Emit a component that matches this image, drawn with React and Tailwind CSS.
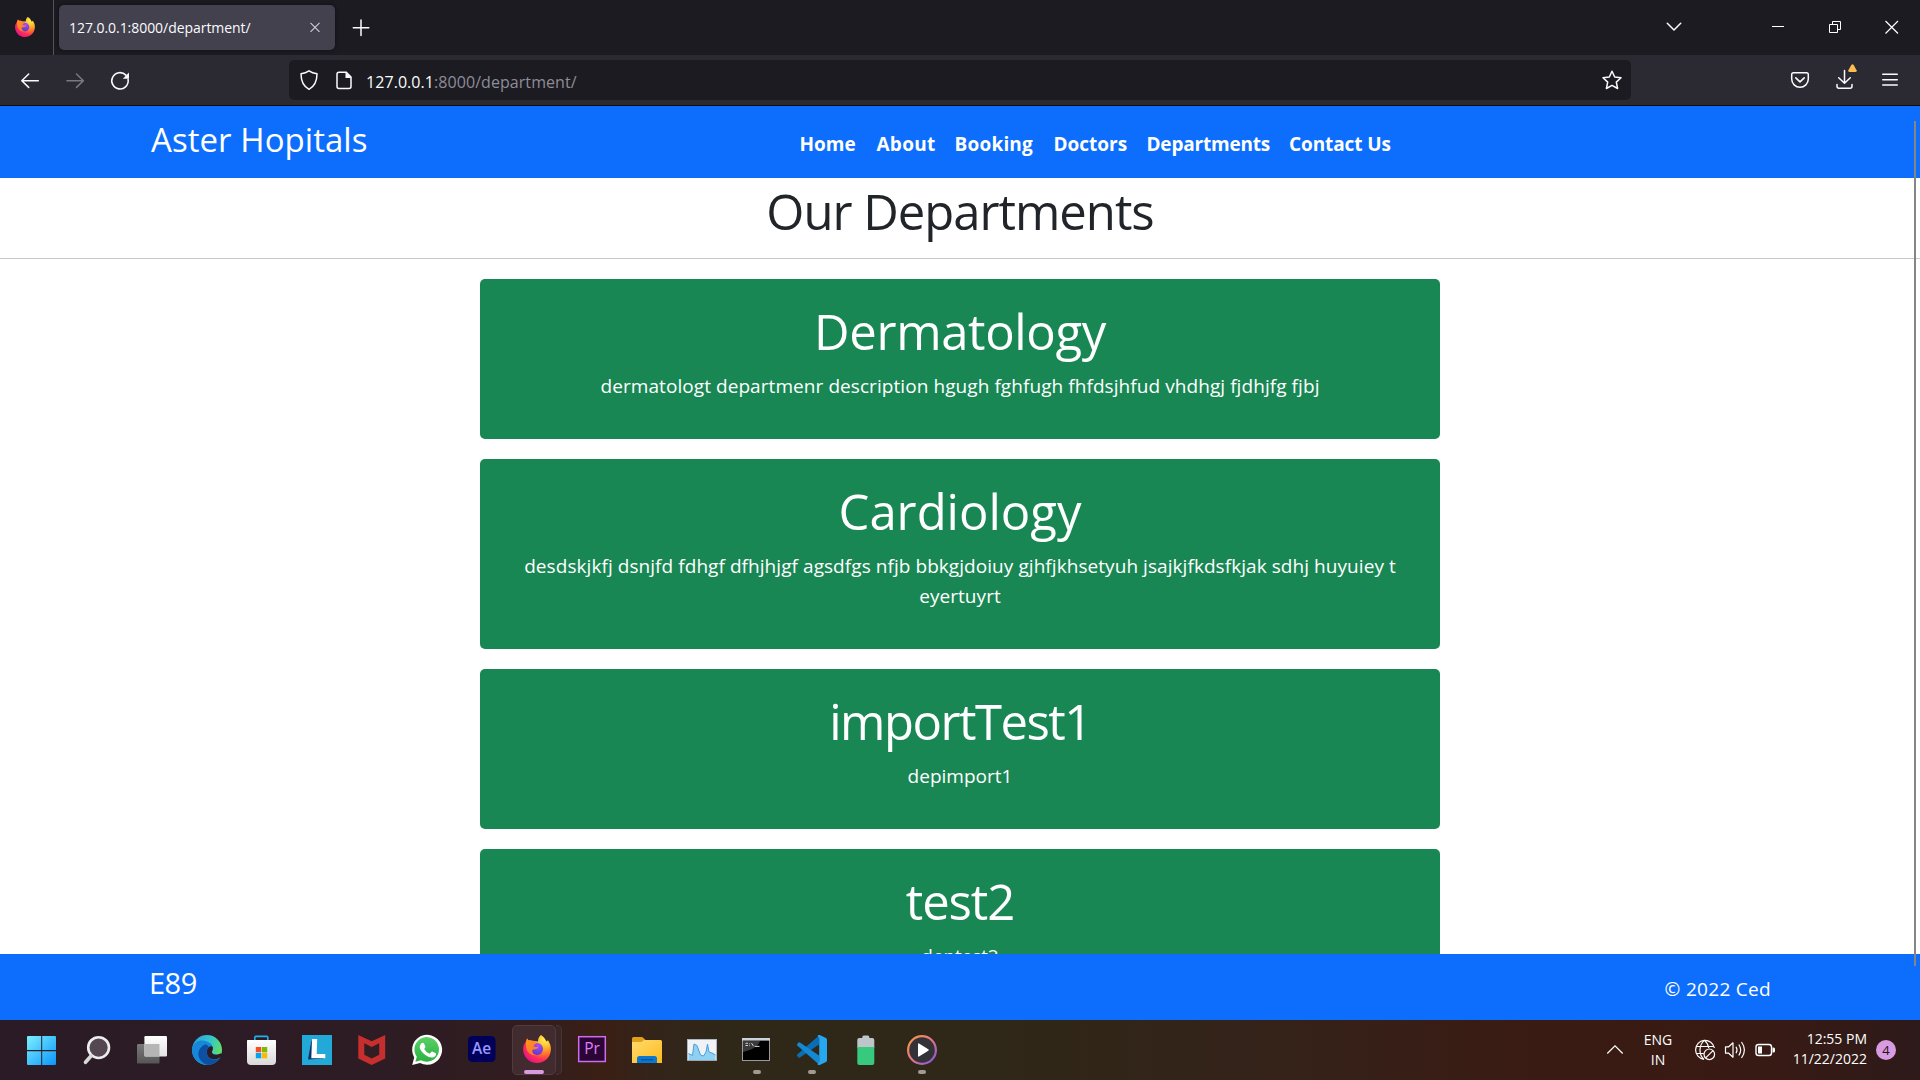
import React, { useId } from "react";

const departments = [
  { name: "Dermatology", tracking: "tracking-[-0.35px]", body: "tracking-[0.07px]", lines: ["dermatologt departmenr description hgugh fghfugh fhfdsjhfud vhdhgj fjdhjfg fjbj"] },
  { name: "Cardiology", tracking: "tracking-normal", body: "tracking-[0.06px]", lines: ["desdskjkfj dsnjfd fdhgf dfhjhjgf agsdfgs nfjb bbkgjdoiuy gjhfjkhsetyuh jsajkjfkdsfkjak sdhj huyuiey t", "eyertuyrt"] },
  { name: "importTest1", tracking: "tracking-[-1.5px]", body: "tracking-normal", lines: ["depimport1"] },
  { name: "test2", tracking: "tracking-[-1.1px]", body: "tracking-[-0.1px]", lines: ["deptest2"] },
];

const links = [
  ["Home", "w-[77px]"],
  ["About", "w-[78px] tracking-[0.25px]"],
  ["Booking", "w-[99px] tracking-[0.2px]"],
  ["Doctors", "w-[93px]"],
  ["Departments", "w-[142.5px] tracking-[-0.2px]"],
  ["Contact Us", "w-[110px] tracking-[-0.1px]"],
];

/* Icon whose viewBox is given in window coordinates. */
function Icon({ x, y, w, h, children, className = "" }) {
  return (
    <svg width={w} height={h} viewBox={`${x} ${y} ${w} ${h}`} fill="none" className={`block shrink-0 ${className}`}>
      {children}
    </svg>
  );
}

function Firefox({ size }) {
  const id = useId().replace(/[^a-zA-Z0-9]/g, "");
  return (
    <svg width={size} height={size} viewBox="0 0 28 28" className="block shrink-0">
      <defs>
        <radialGradient id={`${id}b`} cx="0.78" cy="0.16" r="0.95">
          <stop offset="0" stopColor="#fff44f" />
          <stop offset="0.28" stopColor="#ffbd2e" />
          <stop offset="0.52" stopColor="#ff7a2a" />
          <stop offset="0.76" stopColor="#ff2f55" />
          <stop offset="1" stopColor="#e2128a" />
        </radialGradient>
        <radialGradient id={`${id}p`} cx="0.6" cy="0.2" r="0.9">
          <stop offset="0" stopColor="#a94bff" />
          <stop offset="1" stopColor="#4b3bc4" />
        </radialGradient>
        <linearGradient id={`${id}o`} x1="0" y1="0" x2="1" y2="1">
          <stop offset="0" stopColor="#ff9a16" />
          <stop offset="1" stopColor="#ff6a3c" />
        </linearGradient>
      </defs>
      <path d="M18 0C21 2 22.5 4.3 23.4 6.600L25 5.200C27.200 8.400 28 11.500 27.900 14.400C27.600 22.200 21.600 28 14 28C6.200 28 .1 21.800 .1 14.200C.1 10.800 1.400 8.300 3.100 6.200C3 5 3.400 4.400 4.200 3.400L5.400 5.300C7.200 5 8.600 5.200 9.800 5.800L15 6.400C15 3.800 16 1.400 18 0Z" fill={`url(#${id}b)`} />
      <circle cx="14" cy="14" r="6" fill={`url(#${id}p)`} />
      <path d="M4.200 3.400L5.400 5.300C8 4.900 9.600 5.700 10.700 7C11.800 7.100 12.800 7.100 13.600 7.500C12.800 9.400 10.800 9.700 10.600 11.200C11.900 12.200 14.600 11.700 15.600 12C14.900 14.300 11.600 14.100 9.500 14.800C8.900 17.500 10.700 19.600 13.500 20.200C7.500 21.300 3 16.500 3.200 11C3 9.500 2.800 8 3.100 6.200Z" fill={`url(#${id}o)`} />
    </svg>
  );
}

const taskIcons = [
  /* Start */
  <g key="start" fill="url(#winblue)">
    <path d="M28 1036h13.2v14H27v-13q0-1 1-1zM42.2 1036H55q1 0 1 1v13H42.2zM27 1051.2h14.2v13.8H28q-1 0-1-1zM42.2 1051.2H56V1064q0 1-1 1H42.2z" />
  </g>,
  /* Search */
  <g key="search">
    <circle cx="98.6" cy="1047.6" r="10.4" fill="#54474f" stroke="#ededed" strokeWidth="2.6" />
    <path d="M91 1056l-5.5 6.3" stroke="#d9d9d9" strokeWidth="3.6" strokeLinecap="round" />
  </g>,
  /* Task view */
  <g key="view">
    <rect x="137" y="1044" width="22.5" height="19.6" rx="1.2" fill="url(#grayG)" />
    <rect x="144.4" y="1036" width="22.6" height="20.4" rx="1.2" fill="url(#whiteG)" />
    <path d="M144.4 1044h15.1v12.4h-14q-1.1 0-1.1-1.2z" fill="#b5b5b5" />
  </g>,
  /* Edge */
  <g key="edge">
    <circle cx="207" cy="1050" r="15" fill="url(#edgeTop)" />
    <path d="M192 1049C193 1043 198 1040.5 202 1040.5C208 1040.5 213 1044.5 213 1048C213 1050.5 211.5 1051.5 212 1052.7C213 1055 218.5 1055.3 221.5 1053C219 1061 213 1065 207 1065C198.7 1065 191.5 1058 192 1049Z" fill="#1687d9" />
    <path d="M204.8 1044.5C199 1047.5 196.5 1054 200 1059.3C202 1062.6 205.5 1065 209 1064.9C215 1064 219 1060.6 220.4 1058C215 1061.5 209.5 1059.5 207.5 1056C206 1053 206.5 1049.5 209 1047.3C208 1045.2 206.5 1044.2 204.8 1044.5Z" fill="#0d4fa3" />
    <path d="M209 1047.3C206.5 1049.5 206.2 1053 207.8 1056C210 1059.3 215 1060.5 219.5 1057.8L222.5 1055.2C222.2 1053.6 221.5 1053 220 1053.8C216.5 1055.4 212.8 1054.6 212 1052.7C211.5 1051.2 213.2 1050.3 212.9 1047.8C212 1045.8 210 1046 209 1047.3Z" fill="#2b1b24" />
  </g>,
  /* Store */
  <g key="store">
    <path d="M254.8 1041v-3.6q0-1 1-1h11q1 0 1 1v3.6" stroke="#1fb0ee" strokeWidth="1.6" />
    <path d="M247 1040.5q0-.6.6-.6h27.800q.6 0 .6.6V1061q0 4-4 4h-21q-4 0-4-4z" fill="url(#storeG)" />
    <rect x="255.800" y="1047" width="5.400" height="5.300" fill="#f25022" />
    <rect x="261.900" y="1047" width="5.300" height="5.300" fill="#7fba00" />
    <rect x="255.800" y="1053" width="5.400" height="5.300" fill="#00a4ef" />
    <rect x="261.900" y="1053" width="5.300" height="5.300" fill="#ffb900" />
  </g>,
  /* L */
  <g key="l">
    <rect x="302" y="1035" width="30" height="30" fill="#22a9d8" />
    <path d="M311.500 1040l-3.500 19.500 16-1-9-4z" fill="#0b2f6b" />
    <path d="M312 1039h5.200l-.5 15h8.600v4.200h-14z" fill="#fff" />
  </g>,
  /* McAfee */
  <g key="mc">
    <path d="M358.300 1035L371.700 1041.300L385.200 1035V1058.500L371.700 1065L358.300 1058.500Z" fill="#c62f2e" />
    <path d="M364.300 1043.300L371.700 1047L379.200 1043.300V1054.800L371.700 1058.500L364.300 1054.800Z" fill="#311d24" />
  </g>,
  /* WhatsApp */
  <g key="wa">
    <path d="M412.200 1065l2-7.600A15 15 0 1 1 420 1063z" fill="#fff" />
    <path d="M415.400 1061.700l1.400-5A12.300 12.300 0 1 1 421 1060.300z" fill="url(#waG)" />
    <path d="M421.200 1043.400q1.800-1.400 2.800 0l1.400 3.200q.2.900-1.200 2.300 1.900 3.400 5.500 4.900l1.800-2q.5-.4 1.200-.1l3.200 1.600q.8 2.400-2.300 4-3.200 1.200-8.300-2.300-5.400-4.500-5.600-7.800 0-2.400 1.500-3.800z" fill="#fff" />
  </g>,
  /* After Effects */
  <g key="ae">
    <rect x="468" y="1036" width="27.500" height="26" rx="4.500" fill="#00005b" />
    <text x="481.700" y="1054" textAnchor="middle" fontSize="15.500" fontWeight="600" fill="#9999ff" className="font-['Open_Sans',sans-serif]">Ae</text>
  </g>,
  null,
  /* Premiere */
  <g key="pr">
    <rect x="578.700" y="1036.700" width="26.600" height="24.800" fill="#2a0634" stroke="#cf6bf0" strokeWidth="1.500" />
    <text x="592" y="1054" textAnchor="middle" fontSize="15.500" fontWeight="500" fill="#e07cff" className="font-['Open_Sans',sans-serif]">Pr</text>
  </g>,
  /* Explorer */
  <g key="exp">
    <path d="M632 1038.500q0-1.500 1.500-1.500h8q1 0 1.700.7l2.300 2.300v4H632z" fill="#e0a01a" />
    <path d="M632 1042h9.500l2.500-2h16.500q1.500 0 1.500 1.500V1063H632z" fill="url(#folderG)" />
    <path d="M637 1063v-4.500q0-2.500 2.500-2.500h15q2.500 0 2.500 2.500v4.500z" fill="#0a78cf" />
    <path d="M641 1059.700h12" stroke="#0a4f96" strokeWidth="1.200" />
  </g>,
  /* Performance graph */
  <g key="perf">
    <rect x="687.500" y="1039.500" width="29" height="20.800" fill="#f1f2f5" stroke="#a9b7c6" />
    <path d="M688.500 1053.500l4 2 1.500-11.500 3 1.500 3.500 9.500 3 1 2.500-4 1.500-8 1.500 8 4 1.500 2.500 1.500v5h-27z" fill="#8fd0f5" />
    <path d="M688.500 1053.500l4 2 1.500-11.500 3 1.500 3.500 9.500 3 1 2.500-4 1.500-8 1.500 8 4 1.500 2.500 1.500" stroke="#4a9fd8" strokeWidth="1" />
  </g>,
  /* Terminal */
  <g key="cmd">
    <rect x="742.500" y="1038.500" width="27" height="22" fill="#000" stroke="#9a9a9a" />
    <path d="M743 1041h17q-3 8-17 11z" fill="#3a3a3a" />
    <path d="M742 1038h28v2.600h-28z" fill="#ccd2dc" />
    <path d="M745.500 1043.300h2.500m-2.500 2.200h2.500m1.500-2v.8m0 1.200v.6m2-3l2 3m1.200.3h4.800" stroke="#d6d6d6" strokeWidth="1" />
    <rect x="753" y="1070" width="8" height="4" rx="2" fill="#9d9b93" />
  </g>,
  /* VS Code */
  <g key="vs">
    <path d="M819 1035.500v9L800 1057.500q-.8.4-1.400 0l-1.400-1.500q-.5-.8 0-1.500z" fill="#0a6db5" />
    <path d="M819 1064.500v-9L800 1042.500q-.8-.4-1.400 0l-1.400 1.500q-.5.800 0 1.500z" fill="#1389d3" />
    <path d="M817.500 1035.800q1-1.200 2.200-.7l6.300 3q1 .5 1 1.600v20.600q0 1.100-1 1.600l-6.300 3q-1.200.500-2.200-.7l1.700-2.200v-24z" fill="#27a7f0" />
    <rect x="808" y="1070" width="8" height="4" rx="2" fill="#9d9b93" />
  </g>,
  /* Battery */
  <g key="bat">
    <path d="M857.300 1040q0-2 2-2h3v-1q0-1.500 1.500-1.500h4q1.500 0 1.500 1.500v1h3q2 0 2 2v8h-17z" fill="#bfc6ca" />
    <path d="M857.300 1047h17v16q0 2-2 2h-13q-2 0-2-2z" fill="#37c97d" />
  </g>,
  /* Media player */
  <g key="mp">
    <circle cx="922" cy="1050" r="13.900" fill="#333337" stroke="url(#ring)" strokeWidth="2.200" />
    <path d="M918 1044.200q0-1.200 1-.7l9.300 5.700q1 .8 0 1.600l-9.300 5.700q-1 .5-1-.7z" fill="#fff" />
    <rect x="918" y="1070" width="8" height="4" rx="2" fill="#9d9b93" />
  </g>,
];

function Gradients() {
  return (
    <svg width="0" height="0" className="absolute">
      <defs>
        <linearGradient id="winblue" gradientUnits="userSpaceOnUse" x1="27" y1="1036" x2="56" y2="1065"><stop stopColor="#7cf0ff" /><stop offset="1" stopColor="#0a95fb" /></linearGradient>
        <linearGradient id="grayG" x1="0" y1="0" x2="0" y2="1"><stop stopColor="#7a7a7a" /><stop offset="1" stopColor="#555" /></linearGradient>
        <linearGradient id="whiteG" x1="0" y1="0" x2="0" y2="1"><stop stopColor="#fff" /><stop offset="1" stopColor="#e2e2e2" /></linearGradient>
        <linearGradient id="edgeTop" x1="0" y1="0.3" x2="1" y2="0.6"><stop stopColor="#26a6de" /><stop offset="0.55" stopColor="#36c6c8" /><stop offset="1" stopColor="#66e25a" /></linearGradient>
        <linearGradient id="storeG" x1="0" y1="0" x2="0" y2="1"><stop stopColor="#fff" /><stop offset="1" stopColor="#d9d9d9" /></linearGradient>
        <linearGradient id="waG" x1="0" y1="0" x2="0" y2="1"><stop stopColor="#5bd066" /><stop offset="1" stopColor="#2bb141" /></linearGradient>
        <linearGradient id="folderG" x1="0" y1="0" x2="1" y2="1"><stop stopColor="#ffdb70" /><stop offset="1" stopColor="#fdbb1c" /></linearGradient>
        <linearGradient id="ring" x1="0" y1="0" x2="1" y2="1"><stop stopColor="#ff9a3c" /><stop offset="0.5" stopColor="#e0748a" /><stop offset="1" stopColor="#7b55e0" /></linearGradient>
      </defs>
    </svg>
  );
}

function TitleBar() {
  return (
    <div className="flex h-[55px] shrink-0 bg-[#1c1b22]">
      <div className="flex w-[54px] justify-end border-r border-[#54535a] pt-[17px] pr-[18px]">
        <Firefox size={20} />
      </div>
      <div className="mt-[5px] ml-[5px] flex h-[45px] w-[276px] items-center rounded-[5px] bg-[#42414d] pl-[10px] shadow-[0_0_4px_rgba(0,0,0,0.5)]">
        <span className="w-[239px] shrink-0 pt-px text-[14px] leading-[20px] tracking-[-0.05px] text-[#fbfbfe]">127.0.0.1:8000/department/</span>
        <Icon x={308} y={20} w={14} h={15}>
          <path d="M310.500 22.800l9 9m0-9l-9 9" stroke="#cfcfd4" strokeWidth="1.100" />
        </Icon>
      </div>
      <Icon x={345} y={0} w={32} h={55} className="ml-[10px]">
        <path d="M361 20v15.500M353.300 27.700h15.500" stroke="#fbfbfe" strokeWidth="1.500" strokeLinecap="round" />
      </Icon>
      <Icon x={1650} y={0} w={48} h={55} className="ml-auto">
        <path d="M1667.300 23.300l6.700 6.700 6.700-6.700" stroke="#fbfbfe" strokeWidth="1.500" strokeLinecap="round" strokeLinejoin="round" />
      </Icon>
      <Icon x={1749} y={0} w={57} h={55} className="ml-[51px]">
        <path d="M1772 26.500h12" stroke="#fff" />
      </Icon>
      <Icon x={1806} y={0} w={57} h={55}>
        <path d="M1829.500 24.500h8v8h-8zM1832.500 24v-2.500h8v8h-2.500" stroke="#fff" />
      </Icon>
      <Icon x={1863} y={0} w={57} h={55}>
        <path d="M1885.500 21l12.500 12.500m0-12.500l-12.500 12.500" stroke="#fff" strokeWidth="1.200" />
      </Icon>
    </div>
  );
}

function ToolBar() {
  return (
    <div className="flex h-[50px] shrink-0 bg-[#2b2a33]">
      <Icon x={8} y={55} w={45} h={50} className="ml-2">
        <path d="M38.300 80.700H22M28.700 74l-6.900 6.700 6.900 6.700" stroke="#fbfbfe" strokeWidth="1.500" strokeLinecap="round" strokeLinejoin="round" />
      </Icon>
      <Icon x={53} y={55} w={45} h={50}>
        <path d="M67 80.700h16.300M76.500 74l6.900 6.700-6.900 6.700" stroke="#7a7981" strokeWidth="1.500" strokeLinecap="round" strokeLinejoin="round" />
      </Icon>
      <Icon x={98} y={55} w={45} h={50}>
        <path d="M128.100 79.500a8.200 8.200 0 1 1-2.200-4.400" stroke="#fbfbfe" strokeWidth="1.600" strokeLinecap="round" />
        <path d="M129 72.500v6.200h-6.200z" fill="#fbfbfe" />
      </Icon>
      <div className="mt-[5px] ml-[146px] flex h-[40px] w-[1342px] items-center rounded-[5px] bg-[#1c1b22]">
        <Icon x={289} y={60} w={77} h={40}>
          <path d="M309 70.800c-2.300 1.600-4.900 2.500-8 2.900 0 7.400 2.200 12.400 8 15.600 5.800-3.200 8-8.200 8-15.600-3.100-.4-5.700-1.300-8-2.900z" stroke="#fbfbfe" strokeWidth="1.500" strokeLinejoin="round" />
          <path d="M339 72.200h7.300l4.700 4.800v9.500q0 2-2 2h-10q-2 0-2-2v-12.300q0-2 2-2z" stroke="#fbfbfe" strokeWidth="1.500" />
          <path d="M345.500 72v6h6z" fill="#fbfbfe" />
        </Icon>
        <span className="pt-[3px] text-[16px] leading-[24px] tracking-[0.06px] text-[#8d8d97]"><span className="text-[#fbfbfe]">127.0.0.1</span>:8000/department/</span>
        <Icon x={1598} y={60} w={33} h={40} className="ml-auto">
          <path d="M1612 71.200l2.700 5.800 6.300.8-4.700 4.300 1.300 6.400-5.600-3.100-5.600 3.100 1.300-6.400-4.700-4.300 6.300-.8z" stroke="#fbfbfe" strokeWidth="1.500" strokeLinejoin="round" />
        </Icon>
      </div>
      <Icon x={1778} y={55} w={44} h={50} className="ml-[147px]">
        <path d="M1793.500 72.800h13q1.800 0 1.800 1.800v4.400a8.300 8.300 0 0 1-16.600 0v-4.400q0-1.800 1.800-1.800z" stroke="#fbfbfe" strokeWidth="1.500" />
        <path d="M1795.800 77.800l4.200 4 4.200-4" stroke="#fbfbfe" strokeWidth="1.600" strokeLinecap="round" strokeLinejoin="round" />
      </Icon>
      <Icon x={1822} y={55} w={46} h={50}>
        <path d="M1844.500 70.500v12.500M1838.700 77.700l5.800 5.500 5.800-5.500" stroke="#fbfbfe" strokeWidth="1.500" strokeLinecap="round" strokeLinejoin="round" />
        <path d="M1837 84.500v1.700q0 2 2 2h11q2 0 2-2v-1.700" stroke="#fbfbfe" strokeWidth="1.500" strokeLinecap="round" />
        <path d="M1851.200 65.300q1.300-2 2.600 0l2.800 4.900q.8 1.800-1.200 1.800h-5.800q-2 0-1.200-1.800z" fill="#ffbd4f" />
      </Icon>
      <Icon x={1868} y={55} w={44} h={50}>
        <path d="M1882.700 74.300h14.600M1882.700 79.700h14.600M1882.700 85h14.600" stroke="#fbfbfe" strokeWidth="1.400" strokeLinecap="round" />
      </Icon>
    </div>
  );
}

function Page() {
  return (
    <div className="flex h-[915px] shrink-0 flex-col border-t border-[#0c0c0d] bg-white">
      <header className="flex h-[72px] shrink-0 bg-[#0d6efd] pl-[151px] text-white">
        <div className="w-[648.5px] pt-[10px] text-[33px] leading-[48px] tracking-[0.05px]">Aster Hopitals</div>
        <nav className="flex pt-[23px] text-[19px] leading-[30px] font-bold">
          {links.map(([label, cls]) => (
            <a key={label} className={`whitespace-nowrap ${cls}`}>{label}</a>
          ))}
        </nav>
      </header>
      <main className="flex min-h-0 flex-1 flex-col overflow-hidden">
        <h1 className="mt-[3px] h-[77px] shrink-0 text-center text-[49px] leading-[60px] tracking-[-1px] text-[#212529]">Our Departments</h1>
        <hr className="shrink-0 border-0 border-t border-[#c8c9ca]" />
        <div className="mx-auto mt-5 flex w-[960px] flex-col gap-5">
          {departments.map((d) => (
            <section key={d.name} className="shrink-0 rounded-[5px] bg-[#198754] pt-[22px] pb-[38px] text-center text-white">
              <h2 className={`text-[49px] leading-[60px] ${d.tracking}`}>{d.name}</h2>
              <div className={`mt-[10px] text-[19px] leading-[30px] ${d.body}`}>
                {d.lines.map((l) => <p key={l} className="whitespace-nowrap">{l}</p>)}
              </div>
            </section>
          ))}
        </div>
      </main>
      <footer className="flex h-[66px] shrink-0 justify-between bg-[#0d6efd] pr-[149px] pl-[149px] text-white">
        <div className="pt-[10px] text-[29px] leading-[38px] tracking-[-0.5px]">E89</div>
        <div className="pt-[20px] text-[19px] leading-[30px] tracking-[0.3px]">© 2022 Ced</div>
      </footer>
    </div>
  );
}

function TaskBar() {
  return (
    <div className="flex h-[60px] shrink-0 bg-[linear-gradient(90deg,#2a1b26_0%,#2e1c24_20%,#311d20_27%,#3a1f14_31.5%,#33241a_34%,#2f2717_38%,#2f2717_52%,#34231a_65%,#3a1b13_80%,#381a14_92%,#2d1a1a_100%)] pl-[14px]">
      {taskIcons.map((icon, i) =>
        icon ? (
          <Icon key={i} x={14 + 55 * i} y={1020} w={55} h={60}>{icon}</Icon>
        ) : (
          <div key={i} className="flex w-[55px] shrink-0 items-start pt-[5px] pl-[3px]">
            <div className="flex h-[50px] w-[44px] shrink-0 flex-col items-center justify-between rounded-[5px] border border-[#503c3e] bg-[#412b2e] pt-[9px] pl-[5px]">
              <Firefox size={28} />
              <div className="mr-[5px] h-1 w-5 rounded-full bg-[#d99be0]" />
            </div>
            <div className="h-[50px] w-[6px] shrink-0 rounded-r-[5px] border border-l-0 border-[#4a3432] bg-[#3a2627]" />
          </div>
        )
      )}
      <Icon x={1600} y={1020} w={30} h={60} className="ml-auto">
        <path d="M1607.300 1053.500l7.700-7.700 7.700 7.700" stroke="#fff" strokeWidth="1.200" />
      </Icon>
      <div className="w-[56px] pt-[10px] text-center text-[14px] leading-[20px] text-white">
        <div>ENG</div>
        <div>IN</div>
      </div>
      <Icon x={1686} y={1020} w={98} h={60}>
        <g stroke="#fff" strokeWidth="1.200">
          <path d="M1714.400 1048A9.500 9.500 0 1 0 1704 1059.300M1696.300 1046.500h17.500M1696.300 1053.500h7.500M1704 1059.500q-4-3.500-4-9.500t4.500-9.600q3.500 3 4.200 7.600" />
          <circle cx="1709.300" cy="1054.300" r="5.300" />
          <path d="M1705.700 1057.900l7.300-7.300" />
          <path d="M1725.500 1046.800h3.200l4.300-4v14.400l-4.300-4h-3.200zM1736 1046.800q2 3.200 0 6.400M1738.800 1044.500q3.800 5.500 0 11M1741.500 1042q5.800 8 0 16" strokeLinejoin="round" />
          <rect x="1756" y="1044.500" width="15.500" height="11" rx="2.500" strokeWidth="1.400" />
        </g>
        <path d="M1758 1046.500h4v7h-4zM1772.500 1047.500h1q1.500 0 1.500 1.500v2q0 1.500-1.500 1.500h-1z" fill="#fff" />
      </Icon>
      <div className="w-[83px] pt-[9px] text-right text-[14px] leading-[20px] text-white">
        <div>12:55 PM</div>
        <div>11/22/2022</div>
      </div>
      <div className="mt-5 mr-[24px] ml-[9px] flex h-5 w-5 items-center justify-center rounded-full bg-[#d99be0] text-[13px] leading-[20px] text-[#1d1420]">4</div>
    </div>
  );
}

export default function App() {
  return (
    <div className="relative flex h-[1080px] w-[1920px] flex-col overflow-hidden font-['Open_Sans','Noto_Sans',sans-serif]">
      <Gradients />
      <TitleBar />
      <ToolBar />
      <Page />
      <div className="absolute top-[121px] left-[1914px] h-[845px] w-[2px] bg-[#858585]" />
      <TaskBar />
    </div>
  );
}
